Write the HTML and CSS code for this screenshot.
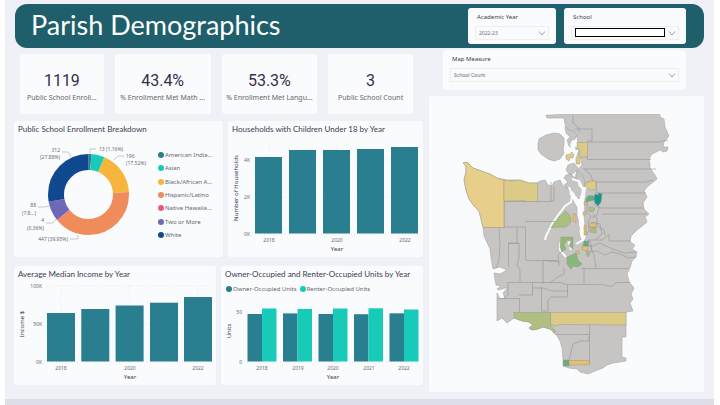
FILE: index.html
```html
<!DOCTYPE html>
<html lang="en">
<head>
<meta charset="utf-8">
<meta name="viewport" content="width=device-width, initial-scale=1">
<title>Parish Demographics</title>
<link rel="stylesheet" href="styles.css">
</head>
<body>
<div class="report">
  <header class="banner">
    <h1>Parish Demographics</h1>
    <div class="slicer slicer-year">
      <label for="year">Academic Year</label>
      <div class="dropdown">
        <select id="year"><option>2022-23</option></select>
        <svg class="chevron" viewBox="0 0 8 5"><path d="M1 .5 4 4 7 .5"/></svg>
      </div>
    </div>
    <div class="slicer slicer-school">
      <label for="school">School</label>
      <div class="dropdown">
        <select id="school"><option></option></select>
        <span class="mask"></span>
        <svg class="chevron" viewBox="0 0 8 5"><path d="M1 .5 4 4 7 .5"/></svg>
      </div>
    </div>
  </header>

  <main class="board">
    <div class="left">
      <section class="kpis">
        <div class="card kpi"><strong>1119</strong><span>Public School Enroll...</span></div>
        <div class="card kpi"><strong>43.4%</strong><span>% Enrollment Met Math ...</span></div>
        <div class="card kpi"><strong>53.3%</strong><span>% Enrollment Met Langu...</span></div>
        <div class="card kpi"><strong>3</strong><span>Public School Count</span></div>
      </section>

      <div class="row row-top">
        <section class="card">
          <h2>Public School Enrollment Breakdown</h2>
          <div class="split">
            <svg class="donut" viewBox="14 134 142 123">
              <g class="ring" transform="rotate(-90 88.5 194.5)">
                <circle cx="88.5" cy="194.5" r="32.5" pathLength="1119" stroke="#297f8f" stroke-dasharray="13 1106"/>
                <circle cx="88.5" cy="194.5" r="32.5" pathLength="1119" stroke="#18cbb8" stroke-dasharray="59 1060" stroke-dashoffset="-13"/>
                <circle cx="88.5" cy="194.5" r="32.5" pathLength="1119" stroke="#f6b53d" stroke-dasharray="196 923" stroke-dashoffset="-72"/>
                <circle cx="88.5" cy="194.5" r="32.5" pathLength="1119" stroke="#f08b5c" stroke-dasharray="447 672" stroke-dashoffset="-268"/>
                <circle cx="88.5" cy="194.5" r="32.5" pathLength="1119" stroke="#ec5a7c" stroke-dasharray="4 1115" stroke-dashoffset="-715"/>
                <circle cx="88.5" cy="194.5" r="32.5" pathLength="1119" stroke="#6c69b6" stroke-dasharray="88 1031" stroke-dashoffset="-719"/>
                <circle cx="88.5" cy="194.5" r="32.5" pathLength="1119" stroke="#10498f" stroke-dasharray="312 807" stroke-dashoffset="-807"/>
              </g>
              <g class="leader">
                <path d="M90 153v-4h6M62 152h6l3 5M114 160l4-4h6M38 207h7l4-1M46 223h7l3-4M70 239h8v-4"/>
              </g>
              <g class="tick">
                <text x="99" y="151">13 (1.16%)</text>
                <text x="126" y="158">196</text><text x="126" y="165">(17.52%)</text>
                <text class="end" x="60" y="152">312</text><text class="end" x="60" y="159">(27.88%)</text>
                <text class="end" x="36" y="207">88</text><text class="end" x="36" y="215">(7.8...)</text>
                <text class="end" x="44" y="222">4</text><text class="end" x="44" y="230">(0.36%)</text>
                <text class="end" x="68" y="241">447 (39.95%)</text>
              </g>
            </svg>
            <ul class="legend legend-side">
              <li class="teal">American India...</li>
              <li class="mint">Asian</li>
              <li class="amber">Black/African A...</li>
              <li class="orange">Hispanic/Latino</li>
              <li class="pink">Native Hawaiia...</li>
              <li class="violet">Two or More</li>
              <li class="navy">White</li>
            </ul>
          </div>
        </section>

        <section class="card">
          <h2>Households with Children Under 18 by Year</h2>
          <svg class="chart" viewBox="228 134 195 123">
            <path class="grid" d="M255 160H418M255 197H418M255 234H418M269 142V234M336.500 142V234M404.500 142V234"/>
            <g class="bar-teal">
              <rect x="255" y="157" width="27" height="76.500"/>
              <rect x="289" y="150" width="27" height="83.500"/>
              <rect x="323" y="150" width="27" height="83.500"/>
              <rect x="357" y="149" width="27" height="84.500"/>
              <rect x="391" y="147" width="27" height="86.500"/>
            </g>
            <g class="tick">
              <text class="end" x="250" y="162">4K</text><text class="end" x="250" y="199">2K</text><text class="end" x="250" y="236">0K</text>
              <text class="mid" x="269" y="242">2018</text><text class="mid" x="337" y="242">2020</text><text class="mid" x="405" y="242">2022</text>
            </g>
            <g class="axis">
              <text class="mid" x="337" y="251">Year</text>
              <text class="mid" transform="translate(238 188) rotate(-90)">Number of Households</text>
            </g>
          </svg>
        </section>
      </div>

      <div class="row row-bottom">
        <section class="card">
          <h2>Average Median Income by Year</h2>
          <svg class="chart" viewBox="14 279 202 106">
            <path class="grid" d="M47 286H212M47 324H212M47 362H212M61 286V362M129.500 286V362M198 286V362"/>
            <g class="bar-teal">
              <rect x="47" y="313" width="28" height="48.500"/>
              <rect x="81.300" y="309" width="28" height="52.500"/>
              <rect x="115.600" y="305.500" width="28" height="56"/>
              <rect x="150" y="302.700" width="28" height="58.800"/>
              <rect x="184" y="297" width="28" height="64.500"/>
            </g>
            <g class="tick">
              <text class="end" x="42" y="288">100K</text><text class="end" x="42" y="326">50K</text><text class="end" x="42" y="364">0K</text>
              <text class="mid" x="61" y="370">2018</text><text class="mid" x="130" y="370">2020</text><text class="mid" x="198" y="370">2022</text>
            </g>
            <g class="axis">
              <text class="mid" x="130" y="379">Year</text>
              <text class="mid" transform="translate(24 324) rotate(-90)">Income $</text>
            </g>
          </svg>
        </section>

        <section class="card">
          <h2>Owner-Occupied and Renter-Occupied Units by Year</h2>
          <ul class="legend legend-top">
            <li class="teal">Owner-Occupied Units</li>
            <li class="mint">Renter-Occupied Units</li>
          </ul>
          <svg class="chart" viewBox="221 294 202 91">
            <path class="grid" d="M247 312H418M247 362H418M262 301V362M298 301V362M333 301V362M369 301V362M404 301V362"/>
            <g class="bar-teal">
              <rect x="247.500" y="314" width="14.500" height="47.500"/>
              <rect x="283" y="313.400" width="14.500" height="48.100"/>
              <rect x="318.500" y="314" width="14.500" height="47.500"/>
              <rect x="354" y="314.200" width="14.500" height="47.300"/>
              <rect x="389.500" y="313.300" width="14.500" height="48.200"/>
            </g>
            <g class="bar-mint">
              <rect x="262" y="308.500" width="14.500" height="53"/>
              <rect x="297.500" y="309" width="14.500" height="52.500"/>
              <rect x="333" y="308.500" width="14.500" height="53"/>
              <rect x="368.500" y="308.300" width="14.500" height="53.200"/>
              <rect x="404" y="309.500" width="14.500" height="52"/>
            </g>
            <g class="tick">
              <text class="end" x="242" y="314">50</text><text class="end" x="242" y="364">0</text>
              <text class="mid" x="262" y="370">2018</text><text class="mid" x="298" y="370">2019</text><text class="mid" x="333" y="370">2020</text><text class="mid" x="369" y="370">2021</text><text class="mid" x="404" y="370">2022</text>
            </g>
            <g class="axis">
              <text class="mid" x="333" y="379">Year</text>
              <text class="mid" transform="translate(231 331) rotate(-90)">Units</text>
            </g>
          </svg>
        </section>
      </div>
    </div>

    <div class="right">
      <div class="slicer slicer-measure">
        <label for="measure">Map Measure</label>
        <div class="dropdown">
          <select id="measure"><option>School Count</option></select>
          <svg class="chevron" viewBox="0 0 8 5"><path d="M1 .5 4 4 7 .5"/></svg>
        </div>
      </div>
      <section class="card map-card">
        <svg class="map" viewBox="429 96 275 296" role="img" aria-label="School count by district">
          <g class="land">
            <path d="M546 115L552 115 558 114.500 660 114.500 660 117 664 119 665 127 669 136 664 142 663 147 668 147 667 151 663 152 660 150 652 154 649 159 650 164 650 168 655 175 657 179 652 183 646 188 644 191 647 197 643 203 644 209 649 214 645 217 647 222 641 227 637 230 631 236 630 242 635 245 632 249 637 252 636 257 632 261 630 268 627 274 629 281 630 283 634 288 631 294 633 299 630 303 633 311 626 312 626 337 622 337 622 357 626 358 626 361 613 363 607 365 603 368 595 371 588 374 580 372 577 369 569 368 563 366 563 359 562 348 560 341 556 334 555 331 550 329 543 327 538 329 532 330 529 328 533 325 529 322 522 321 514 318 510 321 507 323 502 318 497 321 497 293 500 299 505 298 503 293 508 287 499 290 497 289 501 286 496 285 494 273 500 274 507 270 500 267 493 269 491 258 490 249 484 236 483 227 481 219 479 211 474 206 469 199 466 190 464 180 466 172 466 166 463 163 467 162 473 168 484 172 490 174 497 178 507 180 520 180 529 183 537 183 540 181 545 180 548 185 552 186 554 182 560 180 563 186 567 188 571 193 573 200 577 206 577 216 580 224 579 232 581 240 585 240 587 235 585 226 584 214 585 202 582 196 583 190 580 184 575 178 577 170 582 165 581 159 577 155 579 150 578 143 577 137 573 133 569 131 565 124 564 118 560 118 547 118z"/>
            <path d="M538 144L539 139 546 135 554 133 560 134 564 138 564 144 563 149 564 153 560 159 554 161 548 159 541 154 538 150z"/>
            <path d="M565 126L569 130 573 131 577 135 575 139 570 141 573 146 579 149 575 150 569 146 567 140 570 137 566 133zM568 165L574 163 578 168 574 173 570 175 566 170zM566 175L571 174 576 179 578 186 582 190 583 196 579 199 574 194 569 190 564 185 568 182 564 178zM577 170L582 174 585 182 585 190 580 185 577 179z"/>
          </g>
          <g class="canal">
            <path d="M569 187L572 196 571 202 565 206 559 214 552 224 546 236 545 240M575 196L579 204 579 210M572 238L569 243 571 250M564 238L560 244 560 250 566 257M586 187L581 197 580 206 581 216 580 225 584 233 583 240 576 244M572 179L579 181 583 190"/>
            <path class="sound" d="M572 143L574 152 575 161 580 166M571 192L575 199 580 208 581 218 582 228 583 238M584 187L583 196 581 206"/>
          </g>
          <g class="lines">
            <path d="M573 115V123L579 128V132M575 129H592V141H587M587 142H658L668 140M587 159.500H651M583 169H656M587 182H645L653 180M595 193H646M600 208H644M602 214H647M551 182V201H554V186M504 201V227M504 201.500H551M483 227H525.500V260M525.500 221.500H555M499 228L500 246 499 260 496 268M517 227V243M519 243H508.500V267M508.500 243.500H519V258L517 265 520 270V282M526 260.500H543V284M543 260.500H558M508 282.500H560L567 284.500H602L611 286.500 617 282.500H630M508 282.500V295L504 298M519.500 298.500V312M498 298.500H519.500M532.500 282.500V295H519M532.500 288H543L553 291H567.500M541.500 287V311M567.500 284.500V297H551L548 300V311H541.500M550 283L556 278 564 274 564 268M584 268V284M581 268.500H629M544 260.500L560 262M589.500 325V364M555 334.500H589.500M569 360L573 344 580 341 588 341 589.500 336M564 249L558 255 559 266M587 252L597 251 605 255 612 252 620 254 628 258 636 257M587 246L592 246 600 243 608 247 616 250 624 253 636 252M588 240H602L609 234.500V241H631M590 245L594 255 596 268M593 214L597 218V226L604 230 605 235M600 208L596 202M587 159L586 142M584 169L590 174 593 181M596 181V190L600 195"/>
            <path d="M587 200V212L591 216 588 222 589 230 586 236M593 204L599 208 597 215 592 218M591 222L600 224 602 234 595 240M588 227L597 228M589 240L592 247 589 255"/>
          </g>
          <g class="areas">
            <path fill="#e7ce8a" d="M463 163L467 162 473 168 484 172 490 174 497 178 504 180V227.500H483L481 219 479 211 474 206 469 199 466 190 464 180 466 172 466 166z"/>
            <path fill="#dbcb87" d="M504 180L512 181 520 180 529 183 537.500 183V201.500H526L524 200.500 504 201zM577 142.500H587.500V157H580V164H576V157L580 155V150L577 148zM566 155L570 154 572 152 574 155 573 158 570 158 569 161 566 159zM585 183L591 181 596 181V190H590L585 186zM550.500 312.500H626V325L560 324.500 556 326 552 324.500H550.500z"/>
            <path fill="#afbf80" d="M514 312.500H550.500V325L555 331V334L550 329 543 327 538 329 532 330 529 328 533 325 529 322 522 321 514 318z"/>
            <path fill="#a9c07b" d="M566 211L570 216 571 222 566 227 551 227.500 559 217zM589 207L595 208 593 212 589 211zM590 229L596 228V233L590 232zM587 250L589 254 588 257 586 254z"/>
            <path fill="#92b876" d="M561 237H573V249L569 246 571 241 567 240 564 245 566 249 562 252 560 247z"/>
            <path fill="#87b77b" d="M567 257L572 255 576 253 578 260 582 264 578 267 573 266 571 269 567 264z"/>
            <path fill="#63af80" d="M586 198L589 195.500 594 196 594 200 586 202zM584 241H588.500V246H583zM563.500 360H569V366H563.500z"/>
            <path fill="#119888" stroke="#119888" d="M595 194L598 195 599 193 602 194 601 202 598 206 595 203 594 199z"/>
            <path fill="#e5c06c" d="M573 214H576V223L573 221zM583 212H586V215H583zM584 225H586V235H584zM582 247L588 246 587 251 582 250zM590 223H596V227H590zM569 360.500H589.500V364.500L569 365zM576 251H579V254H576zM584 202H587V205H584z"/>
          </g>
        </svg>
      </section>
    </div>
  </main>
</div>
</body>
</html>
```
FILE: styles.css
```css
* { box-sizing: border-box; }

body {
  margin: 0;
  background: #fff;
  color: #3b3b4f;
  font: 6px/8px "Noto Sans", "Open Sans", sans-serif;
}

h1, h2, ul { margin: 0; padding: 0; font-weight: 400; }

.report {
  min-height: 100vh;
  margin: 0 6px 0 5px;
  padding: 4px 10px 7px 9px;
  background: #f0f1f7;
  border-bottom: 6px solid #dddee8;
}

/* Banner */
.banner {
  display: flex;
  gap: 8px;
  height: 44px;
  margin-left: 1px;
  padding: 4px 18px 4px 16px;
  background: #1f5f6b;
  border-radius: 12px;
}

.banner h1 {
  flex: 1;
  color: #fff;
  font: 400 27px/34px Lato, sans-serif;
}

.slicer {
  display: flex;
  flex-direction: column;
  gap: 5px;
  padding: 5px 7px;
  background: #fafbfd;
  border-radius: 3px;
}

.slicer label { padding-left: 2px; }
.slicer-year { width: 88px; }
.slicer-school { width: 122px; }
.slicer-measure { margin: -2px 18px 0 14px; height: 40px; }

.dropdown { position: relative; display: flex; }

.dropdown select {
  appearance: none;
  width: 100%;
  height: 14px;
  padding: 0 3px;
  border: 1px solid #eeeff2;
  border-radius: 0;
  background: transparent;
  color: #6a6a72;
  font: inherit;
  font-size: 5px;
}

.chevron {
  position: absolute;
  top: 5px;
  right: 3px;
  width: 8px;
  height: 5px;
  fill: none;
  stroke: #a0a0a6;
  pointer-events: none;
}

.mask {
  position: absolute;
  inset: 2px 14px 3px 4px;
  border: 1px solid #000;
  background: #fff;
  pointer-events: none;
}

/* Board */
.board { display: flex; gap: 6px; padding-top: 4px; }
.left { flex: 409; min-width: 0; }
.right { flex: 275; min-width: 0; }

.card { min-width: 0; background: #fafbfd; border-radius: 3px; }
.card h2 { padding: 3px 4px 0; font: 8px/10px Lato, sans-serif; white-space: nowrap; }

.kpis {
  display: grid;
  grid-template-columns: 84fr 96fr 96fr 85fr;
  gap: 11px;
  padding: 2px 10px 0 6px;
}

.kpi {
  display: flex;
  flex-direction: column;
  align-items: center;
  height: 60px;
  padding-top: 16px;
  white-space: nowrap;
}

.kpi strong { color: #33304a; font: 400 16px/22px Roboto, sans-serif; }
.kpi span { padding-top: 2px; color: #66666c; font-size: 7px; }

.row { display: grid; gap: 5px; }
.row-top { grid-template-columns: 209fr 195fr; margin-top: 7px; }
.row-bottom { grid-template-columns: 1fr 1fr; margin-top: 9px; }

.chart, .map, .donut { display: block; width: 100%; }
.map-card { margin-top: 6px; }

/* Charts */
.split { display: grid; grid-template-columns: 142fr 67fr; }
.ring circle { fill: none; stroke-width: 16; }
.leader path { fill: none; stroke: #a9a9ad; stroke-width: 0.6; }
.grid { fill: none; stroke: #dcdde2; stroke-width: 0.6; stroke-dasharray: 1 2; }
.bar-teal { fill: #297f8f; }
.bar-mint { fill: #18cbb8; }
.tick { fill: #6a6a72; font-size: 5px; }
.axis { fill: #3b3b4f; font-size: 6px; }
.mid { text-anchor: middle; }
.end { text-anchor: end; }

.legend { display: flex; color: #66666c; list-style: none; white-space: nowrap; }
.legend li { display: flex; align-items: center; }
.legend li::before {
  width: 6px;
  height: 6px;
  margin-right: 1px;
  border-radius: 50%;
  background: var(--dot);
  content: "";
}
.legend-side { min-width: 0; flex-direction: column; justify-content: space-between; padding: 17px 0 18px 2px; }
.legend-top { gap: 3px; padding: 6px 5px 1px; }

.teal { --dot: #297f8f; }
.mint { --dot: #18cbb8; }
.amber { --dot: #f6b53d; }
.orange { --dot: #f08b5c; }
.pink { --dot: #ec5a7c; }
.violet { --dot: #6c69b6; }
.navy { --dot: #10498f; }

/* Map */
.land path { fill: #c7c5c4; stroke: #a8a6a5; stroke-width: 0.6; }
.lines path { fill: none; stroke: #979594; stroke-width: 0.6; }
.canal path { fill: none; stroke: #fafbfd; stroke-width: 2; }
.canal .sound { stroke-width: 4; }
.areas path { stroke: #8f8d80; stroke-width: 0.4; }
```
